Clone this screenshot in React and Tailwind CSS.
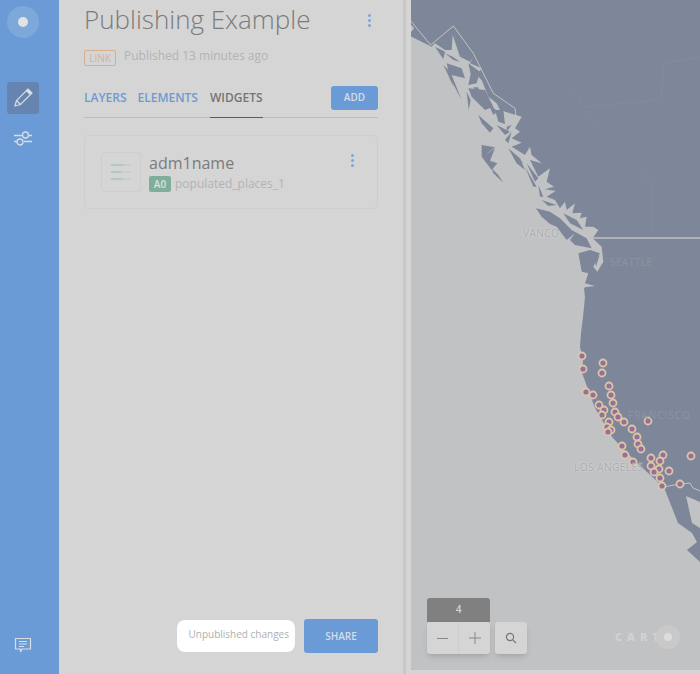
const water = "#7e8799";
const land = "#c1c2c3";

// north coast is traced at 3x, so it sits in a scaled group below
const northLand = "M0 108 L65 140 L75 130 L105 150 L125 150 L128 105 L150 170 L180 185 L190 170 L180 190 L215 205 L200 225 L215 240 L235 290 L260 310 L270 330 L300 340 L335 350 L315 385 L330 395 L305 415 L335 428 L305 440 L345 465 L360 440 L365 465 L395 490 L360 480 L385 530 L420 505 L410 545 L432 560 L405 568 L437 573 L410 590 L435 600 L450 625 L465 605 L470 630 L495 610 L487 640 L515 638 L510 655 L530 650 L525 680 L550 680 L565 690 L548 715 L575 740 L580 785 L562 815 L550 800 L570 760 L540 750 L505 760 L515 815 L535 820 L525 850 L555 858 L525 862 L500 900 L0 900 Z";

const northWater = [
  "M75 140 L105 155 L100 178 Z",
  "M110 190 L155 205 L165 235 L125 225 L155 300 L120 235 Z",
  "M100 195 L120 215 L130 260 L112 220 Z",
  "M175 190 L210 215 L200 250 L175 255 L182 222 Z",
  "M175 265 L225 270 L250 320 L225 330 L185 290 Z",
  "M170 275 L182 300 L176 330 Z",
  "M205 345 L250 385 L240 398 L215 370 Z",
  "M255 330 L280 330 L285 372 L265 365 Z",
  "M290 380 L305 375 L290 395 Z",
  "M215 435 L255 442 L225 465 L255 445 L240 482 L262 490 L245 510 L215 470 Z",
  "M245 505 L265 525 L280 548 L250 520 Z",
  "M300 450 L340 490 L315 480 Z",
  "M350 490 L385 535 L375 545 Z",
  "M378 625 L420 635 L450 655 L485 690 L530 715 L545 745 L495 735 L480 720 L495 700 L470 720 L440 680 L420 672 L395 650 Z",
  "M105 160 L130 180 L150 185 L128 170 Z",
  "M190 262 L205 262 L215 300 Z",
  "M230 300 L262 335 L250 345 Z",
  "M260 375 L300 395 L285 405 Z",
  "M305 395 L295 430 L285 420 Z",
  "M295 445 L330 475 L345 510 L320 490 Z",
  "M345 500 L380 560 L370 560 Z",
  "M385 555 L400 590 L390 590 Z",
  "M395 600 L440 615 L415 618 Z",
  "M460 640 L500 660 L520 690 L480 670 Z",
  "M553 770 L568 768 L558 800 Z",
];

const southLand = "M0 200 L167 253 L172 280 L174 297 L172 317 L170 333 L169 347 L172 360 L171 373 L184 408 L201 437 L226 463 L236 472 L252 487 L254 490 L267 523 L281 533 L286 542 L276 550 L289 562 L289 670 L0 670 Z";

const places = [
  [582, 356], [583, 369], [603, 363], [602, 373], [609, 386], [586, 392], [593, 395], [611, 395], [613, 403],
  [599, 405], [604, 410], [615, 412], [602, 415], [618, 417], [624, 422], [648, 421], [609, 422], [607, 427],
  [611, 430], [608, 432], [632, 429], [637, 437], [638, 444], [641, 449], [622, 446], [625, 455], [663, 455],
  [691, 456], [633, 462], [651, 458], [660, 461], [651, 466], [659, 469], [669, 471], [654, 472], [660, 478],
  [662, 486], [680, 484],
];

function MapCoast() {
  return (
    <svg viewBox="0 0 289 670" className="block h-full w-full">
      <rect width="289" height="670" fill={water} />
      <g fill="none" stroke="#838c9d" strokeWidth="1">
        <path d="M163 90 L173 107 L185 123 M173 107 L213 103 L250 100 L253 63 L289 57" />
        <path d="M230 172 L240 183 L242 233" />
      </g>
      <path d={southLand} fill={land} />
      <g transform="translate(-1 0) scale(0.3333)">
        <path d={northLand} fill={land} />
        <path d="M0 70 L12 85 L0 100 Z" fill={land} />
        {northWater.map((d) => (
          <path key={d} d={d} fill={water} />
        ))}
        <path d="M0 60 L62 135 L130 78 L190 160 L250 280 L315 325 L320 360" fill="none" stroke={land} strokeWidth="3" />
      </g>
      <path d="M176 238 L289 238" fill="none" stroke={land} strokeWidth="1.3" />
      <path d="M252 487 L269 484 L279 483 L282 488 L289 491" fill="none" stroke={land} strokeWidth="1" />
      <path d="M275 496 L289 502 L289 528 L281 523 Z" fill={land} />
      {places.map(([x, y]) => (
        <circle key={`${x}-${y}`} cx={x - 411} cy={y} r="3.5" fill="#96709a" stroke="#dcc6a5" strokeWidth="1.8" />
      ))}
    </svg>
  );
}

function Dots({ className }) {
  return (
    <div className={`flex flex-col gap-[2px] ${className}`}>
      <span className="h-[3px] w-[3px] rounded-full bg-[#7ba6db]"></span>
      <span className="h-[3px] w-[3px] rounded-full bg-[#7ba6db]"></span>
      <span className="h-[3px] w-[3px] rounded-full bg-[#7ba6db]"></span>
    </div>
  );
}

export default function App() {
  return (
    <div className="flex h-[674px] w-[700px] overflow-hidden bg-[#d5d5d5] font-['Open_Sans',sans-serif]">
      {/* sidebar */}
      <aside className="flex w-[59px] shrink-0 flex-col items-start bg-[#6a9bd6] pb-[20px] pl-[7px] pt-[6px]">
        <div className="flex h-8 w-8 items-center justify-center rounded-full bg-[#7ea8da]">
          <span className="h-[10px] w-[10px] rounded-full bg-[#e2e2e2]"></span>
        </div>
        <div className="mt-[44px] flex h-8 w-8 items-center justify-center rounded-[3px] bg-[#6585b0]">
          <svg width="20" height="20" viewBox="0 0 20 20" fill="none" stroke="#d8dde4" strokeWidth="1.2">
            <path d="M2 18 L3.5 12.5 L13.5 2.5 L17.5 6.5 L7.5 16.5 Z" />
            <path d="M3.5 12.5 L7.5 16.5" />
            <path d="M13.5 2.5 L15 1 L19 5 L17.5 6.5 Z" fill="#d8dde4" />
          </svg>
        </div>
        <svg className="ml-[6px] mt-[15px]" width="20" height="18" viewBox="0 0 20 18" fill="none" stroke="#d8dde4" strokeWidth="1.3">
          <path d="M1 6.5 H9 M16 6.5 H19 M1 12.5 H4 M11 12.5 H19" />
          <circle cx="12.5" cy="6" r="3" />
          <circle cx="7" cy="13" r="3" />
        </svg>
        <svg className="ml-[7px] mt-auto" width="18" height="18" viewBox="0 0 18 18" fill="none" stroke="#d8dde4" strokeWidth="1.2">
          <path d="M1.5 2.5 H16.5 V13 H8 L6.5 16 V13 H1.5 Z" />
          <path d="M5 5.5 H13 M5 8 H13 M5 10.5 H10" />
        </svg>
      </aside>

      {/* panel */}
      <section className="flex w-[344px] shrink-0 flex-col px-[25px]">
        <div className="flex items-center justify-between pr-[7px]">
          <h1 className="text-[26px] font-light leading-[38px] text-[#7b7b7b]">Publishing Example</h1>
          <Dots className="mt-[2px]" />
        </div>
        <div className="mt-[8px] flex items-center gap-[8px]">
          <span className="mt-[4px] flex h-[16px] w-[32px] items-center justify-center rounded-[2px] border border-[#d8ae8c] text-[10px] text-[#d0b49c]">LINK</span>
          <span className="text-[12px] leading-[16px] text-[#b3b3b3]">Published 13 minutes ago</span>
        </div>
        <div className="mt-[12px] flex h-[40px] items-center justify-between border-b border-[#bcbcbc]">
          <div className="flex h-full text-[12px] font-semibold">
            <span className="mr-[11px] flex items-center text-[#6a9bd6]">LAYERS</span>
            <span className="mr-[12px] flex items-center text-[#6a9bd6]">ELEMENTS</span>
            <span className="-mb-px flex items-center border-b border-[#5c5c5c] text-[#757575]">WIDGETS</span>
          </div>
          <button className="h-[24px] w-[47px] rounded-[3px] bg-[#6a9bd6] text-[10px] font-semibold text-[#d5dde8]">ADD</button>
        </div>
        <div className="mt-[17px] flex h-[74px] items-start rounded-[4px] border border-[#cdcdcd] pl-[16px] pr-[23px] pt-[16px]">
          <div className="flex h-[40px] w-[40px] flex-col items-center justify-center gap-[5px] rounded-[4px] border border-[#cdcdcd]">
            <div className="flex h-[2px] w-[20px] bg-[#cdcdcd]"><span className="w-[13px] bg-[#b3c9bc]"></span></div>
            <div className="flex h-[2px] w-[20px] bg-[#cdcdcd]"><span className="w-[10px] bg-[#b3c9bc]"></span></div>
            <div className="flex h-[2px] w-[20px] bg-[#cdcdcd]"><span className="w-[12px] bg-[#b3c9bc]"></span></div>
          </div>
          <div className="ml-[8px] flex flex-1 flex-col">
            <span className="text-[16px] leading-[22px] text-[#7b7b7b]">adm1name</span>
            <div className="mt-[2px] flex items-center gap-[4px]">
              <span className="flex h-[16px] w-[22px] items-center justify-center rounded-[2px] bg-[#7fae9c] text-[10px] font-semibold text-[#d9e4df]">A0</span>
              <span className="text-[12px] leading-[16px] text-[#b3b3b3]">populated_places_1</span>
            </div>
          </div>
          <Dots className="mt-[2px]" />
        </div>
        <div className="mb-[21px] mt-auto flex items-center justify-end gap-[9px]">
          <div className="flex h-[32px] w-[118px] items-center justify-end rounded-[8px] bg-white pb-[4px] pr-[6px] text-[10px] text-[#b0b0b0]">Unpublished changes</div>
          <button className="h-[34px] w-[74px] rounded-[3px] bg-[#6a9bd6] text-[10px] font-semibold text-[#d5dde8]">SHARE</button>
        </div>
      </section>

      {/* divider */}
      <div className="w-[8px] shrink-0 border-l-[3px] border-[#c8c8c8]"></div>

      {/* map */}
      <main className="relative mb-[4px] flex-1 overflow-hidden rounded-bl-[2px]">
        <MapCoast />
        <span className="absolute left-[112px] top-[226px] text-[10px] tracking-[0.5px] text-[#a9abb0] [text-shadow:0_0_2px_#e4e4e4]">VANCO</span>
        <span className="absolute left-[199px] top-[255px] text-[10px] tracking-[0.5px] text-[#8b93a4]">SEATTLE</span>
        <span className="absolute left-[217px] top-[408px] text-[10px] tracking-[1px] text-[#8b93a4]">FRANCISCO</span>
        <span className="absolute left-[163px] top-[460px] text-[10px] tracking-[0.5px] text-[#a9abb0] [text-shadow:0_0_2px_#e4e4e4]">LOS ANGELES</span>
        <div className="absolute bottom-[16px] left-[16px] flex items-end gap-[5px]">
          <div className="flex w-[63px] flex-col">
            <div className="flex h-[24px] items-center justify-center rounded-t-[3px] bg-[#808080] pb-[2px] text-[10px] font-semibold text-[#d5d5d5]">4</div>
            <div className="flex h-[32px] items-center rounded-[3px] bg-[#d5d5d5] shadow-md">
              <div className="flex h-full flex-1 items-center justify-center border-r border-[#cdcdcd]">
                <span className="h-px w-[11px] bg-[#8a8a8a]"></span>
              </div>
              <div className="flex h-full flex-1 items-center justify-center">
                <svg width="12" height="12" viewBox="0 0 12 12" stroke="#8a8a8a"><path d="M6 0 V12 M0 6 H12" /></svg>
              </div>
            </div>
          </div>
          <div className="flex h-[32px] w-[32px] items-center justify-center rounded-[3px] bg-[#d5d5d5] shadow-md">
            <svg width="12" height="12" viewBox="0 0 12 12" fill="none" stroke="#767676" strokeWidth="1.2">
              <circle cx="5" cy="5" r="3.6" />
              <path d="M7.8 7.8 L11 11" />
            </svg>
          </div>
        </div>
        <div className="absolute bottom-[21px] right-[20px] flex items-center">
          <span className="text-[11px] font-extrabold tracking-[5px] text-[#d2d2d2]">CART</span>
          <span className="-ml-[8px] flex h-[24px] w-[24px] items-center justify-center rounded-full bg-[#c9c9c9]">
            <span className="h-[8px] w-[8px] rounded-full bg-[#dcdcdc]"></span>
          </span>
        </div>
      </main>
    </div>
  );
}
